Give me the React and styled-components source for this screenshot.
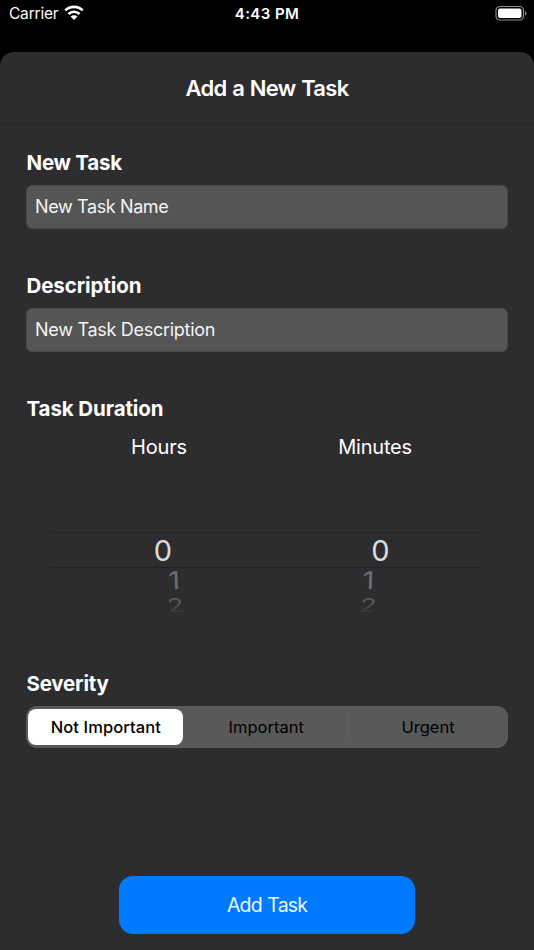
import React, { useState } from "react";
import styled, { createGlobalStyle } from "styled-components";

const GlobalStyle = createGlobalStyle`
  * {
    box-sizing: border-box;
  }

  body {
    margin: 0;
    background-color: #000;
    font-family: Inter, "Liberation Sans", sans-serif;
    color: #fff;
  }
`;

const Screen = styled.div`
  width: 534px;
  height: 950px;
  display: flex;
  flex-direction: column;
  overflow: hidden;
  background-color: #000;
`;

const StatusBar = styled.div`
  height: 52px;
  padding: 4px 7px 0 9px;
  display: grid;
  grid-template-columns: 1fr auto 1fr;
  align-items: start;
  font-size: 15.5px;
  line-height: 20px;
`;

const Carrier = styled.div`
  display: flex;
  gap: 6px;
  letter-spacing: -0.2px;

  svg {
    margin-top: 1px;
  }
`;

const Clock = styled.div`
  margin-right: 2px;
  font-weight: 600;
  font-size: 15px;
  letter-spacing: 0.4px;
`;

const Battery = styled.svg`
  justify-self: end;
  margin-top: 1px;
`;

const Sheet = styled.div`
  flex: 1;
  display: flex;
  flex-direction: column;
  background-color: #2d2d2f;
  border-radius: 14px 14px 0 0;
`;

const Header = styled.div`
  height: 73px;
  display: flex;
  align-items: center;
  justify-content: center;
  border-bottom: 1px solid #262628;
  font-size: 22px;
  font-weight: 600;
  letter-spacing: -0.7px;
  word-spacing: 0.8px;
`;

const Form = styled.div`
  flex: 1;
  display: flex;
  flex-direction: column;
  padding: 25px 26px 16px;
`;

const Label = styled.div`
  height: 26px;
  padding-left: 0.5px;
  line-height: 26px;
  font-size: 20.5px;
  font-weight: 700;
  letter-spacing: ${(props) => props.$spacing || "-0.1px"};
`;

const Input = styled.input`
  width: 100%;
  height: 44px;
  margin: 9px 0 44px;
  padding: 0 9px 2px 8px;
  border: 1px solid #474748;
  border-radius: 6px;
  outline: none;
  background-color: #555;
  color: #fff;
  font-family: inherit;
  font-size: 18px;
  letter-spacing: ${(props) => props.$spacing};

  &::placeholder {
    color: #f4f4f4;
    opacity: 1;
  }
`;

const Units = styled.div`
  display: grid;
  grid-template-columns: 1fr 1fr;
  margin-top: 12px;
  padding: 0 25px;
  height: 26px;
  line-height: 26px;
  font-size: 20px;
  letter-spacing: -0.2px;
  text-align: center;
`;

const Picker = styled.div`
  height: 211px;
  margin: 0 27px 0 25px;
  padding-top: 72px;
`;

const PickerRow = styled.div`
  display: grid;
  grid-template-columns: 1fr 1fr;
  height: ${(props) => props.$height}px;
  line-height: ${(props) => props.$height}px;
  border: solid #232325;
  border-width: ${(props) => (props.$selected ? "1px 0" : "0")};
  text-align: center;
`;

const Digit = styled.span`
  display: block;
  font-size: 29px;
  color: ${(props) => props.$color};
  transform: translate(${(props) => props.$shift}px, ${(props) => props.$drop || 0}px)
    skewX(${(props) => props.$skew || 0}deg)
    scaleY(${(props) => props.$squash || 1});
`;

const FadedDigit = styled(Digit)`
  font-size: 27px;
  background: linear-gradient(#5c5c5e 30%, #2d2d2f 100%);
  background-clip: text;
  color: transparent;
`;

const Segments = styled.div`
  display: grid;
  grid-template-columns: 157px 1fr 1px 160px;
  align-items: center;
  height: 42px;
  margin-top: 9px;
  padding: 0 0 0 2.4px;
  border-radius: 11px;
  background-color: #59595a;
`;

const Divider = styled.div`
  height: 24px;
  background-color: ${(props) => (props.$visible ? "#636365" : "transparent")};
`;

const Segment = styled.button`
  width: ${(props) => (props.$active ? "155px" : "auto")};
  height: 36px;
  padding: 0;
  border: none;
  border-radius: 8px;
  background-color: ${(props) => (props.$active ? "#fff" : "transparent")};
  color: #000;
  font-family: inherit;
  font-size: 16.5px;
  font-weight: ${(props) => (props.$active ? 500 : 400)};
  letter-spacing: ${(props) => (props.$active ? "0.1px" : "0")};
`;

const AddButton = styled.button`
  width: 296px;
  height: 58px;
  margin: auto auto 0;
  padding: 0;
  border: none;
  border-radius: 14px;
  background-color: #007aff;
  color: #ecf5ff;
  font-family: inherit;
  font-size: 19.5px;
  letter-spacing: -0.85px;
  word-spacing: 1px;
`;

const severities = ["Not Important", "Important", "Urgent"];

const App = () => {
  const [severity, setSeverity] = useState(0);

  return (
    <>
      <GlobalStyle />
      <Screen>
        <StatusBar>
          <Carrier>
            Carrier
            <svg width='20' height='16' viewBox='0 0 20 16'>
              <g fill='none' stroke='#fff' strokeWidth='2.7'>
                <path d='M1.3 5.4a12.4 12.4 0 0 1 17.4 0' />
                <path d='M4.5 9a7.8 7.8 0 0 1 11 0' />
              </g>
              <path d='M6.6 11.6a4.8 4.8 0 0 1 6.8 0L10 15z' fill='#fff' />
            </svg>
          </Carrier>
          <Clock>4:43 PM</Clock>
          <Battery width='32' height='16' viewBox='0 0 32 16'>
            <rect
              x='1'
              y='1.5'
              width='27.5'
              height='13.5'
              rx='4'
              fill='none'
              stroke='#8c8c8c'
              strokeWidth='1.2'
            />
            <rect x='3' y='3.5' width='23.5' height='9.5' rx='2' fill='#fff' />
            <path d='M30 6v4.6c2-.8 2-3.8 0-4.6z' fill='#8c8c8c' />
          </Battery>
        </StatusBar>
        <Sheet>
          <Header>Add a New Task</Header>
          <Form>
            <Label $spacing='-0.25px'>New Task</Label>
            <Input placeholder='New Task Name' $spacing='-0.38px' />
            <Label>Description</Label>
            <Input placeholder='New Task Description' $spacing='-0.28px' />
            <Label>Task Duration</Label>
            <Units>
              <div>Hours</div>
              <div>Minutes</div>
            </Units>
            <Picker>
              <PickerRow $height={36} $selected>
                <Digit $color='#dcdcdc' $shift={4.5} $drop={-0.5}>
                  0
                </Digit>
                <Digit $color='#dcdcdc' $shift={7} $drop={-0.5}>
                  0
                </Digit>
              </PickerRow>
              <PickerRow $height={24}>
                <Digit
                  $color='#6e6e70'
                  $shift={15.5}
                  $drop={1}
                  $squash={0.84}
                  $skew={2}
                >
                  1
                </Digit>
                <Digit
                  $color='#6e6e70'
                  $shift={-5}
                  $drop={1}
                  $squash={0.84}
                  $skew={-2}
                >
                  1
                </Digit>
              </PickerRow>
              <PickerRow $height={26}>
                <FadedDigit $shift={17} $drop={0.7} $squash={0.7} $skew={8}>
                  2
                </FadedDigit>
                <FadedDigit $shift={-5.5} $drop={0.7} $squash={0.7} $skew={-8}>
                  2
                </FadedDigit>
              </PickerRow>
            </Picker>
            <Label $spacing='-0.2px'>Severity</Label>
            <Segments>
              {severities.map((name, i) => (
                <React.Fragment key={name}>
                  {i === 2 && <Divider $visible={severity === 0} />}
                  <Segment
                    $active={severity === i}
                    onClick={() => setSeverity(i)}
                  >
                    {name}
                  </Segment>
                </React.Fragment>
              ))}
            </Segments>
            <AddButton>Add Task</AddButton>
          </Form>
        </Sheet>
      </Screen>
    </>
  );
};

export default App;
